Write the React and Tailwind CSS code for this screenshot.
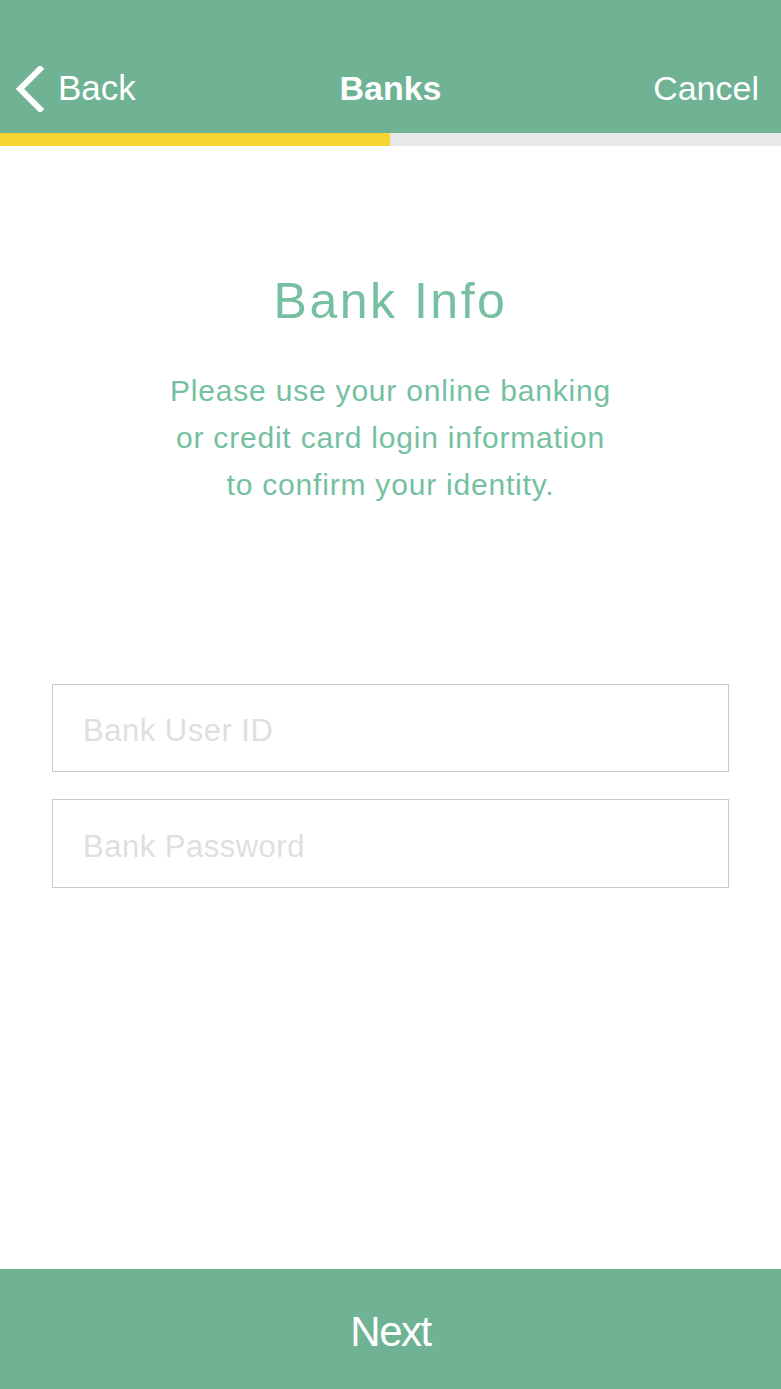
import React from 'react';

const font = { fontFamily: '"Liberation Sans", Arial, sans-serif' };

const App = () => {
    return (
        <div className="flex flex-col min-h-[1389px] bg-white" style={font}>
            <header className="relative h-[133px] bg-[#6fb394] flex items-center justify-between pl-[14px] pr-[22px] pt-[44px] text-white text-[34px]">
                <button className="flex items-center gap-[12px]">
                    <svg width="32" height="46" viewBox="0 0 32 46" fill="none">
                        <path d="M26 3 L6 23 L26 43" stroke="white" strokeWidth="6" strokeLinecap="square" />
                    </svg>
                    <span className="text-[35px]">Back</span>
                </button>
                <h1 className="absolute left-1/2 -translate-x-1/2 font-bold">Banks</h1>
                <button>Cancel</button>
            </header>

            <div className="flex h-[13px]">
                <div className="w-[390px] bg-[#f5d632]" />
                <div className="flex-1 bg-[#e8e8e8]" />
            </div>

            <main className="flex flex-col items-center">
                <h2 className="mt-[125px] text-[50px] leading-[60px] text-[#75c0a0] tracking-[2.5px]">Bank Info</h2>
                <p className="mt-[36px] text-[30px] leading-[47px] text-[#75c0a0] text-center tracking-[0.8px]">
                    Please use your online banking<br />
                    or credit card login information<br />
                    to confirm your identity.
                </p>

                <div className="mt-[176px] w-full px-[52px] flex flex-col gap-[27px]">
                    <input
                        placeholder="Bank User ID"
                        className="h-[88px] w-full border border-[#c8c8c8] px-[30px] pt-[6px] text-[31px] tracking-[0.5px] text-gray-700 placeholder:text-[#dfdfdf] outline-none"
                    />
                    <input
                        type="password"
                        placeholder="Bank Password"
                        className="h-[89px] w-full border border-[#c8c8c8] px-[30px] pt-[6px] text-[31px] tracking-[0.5px] text-gray-700 placeholder:text-[#dfdfdf] outline-none"
                    />
                </div>
            </main>

            <button className="mt-auto h-[120px] w-full bg-[#6fb394] pt-[4px] text-white text-[42px] tracking-[-1.5px]">
                Next
            </button>
        </div>
    );
};

export default App;
